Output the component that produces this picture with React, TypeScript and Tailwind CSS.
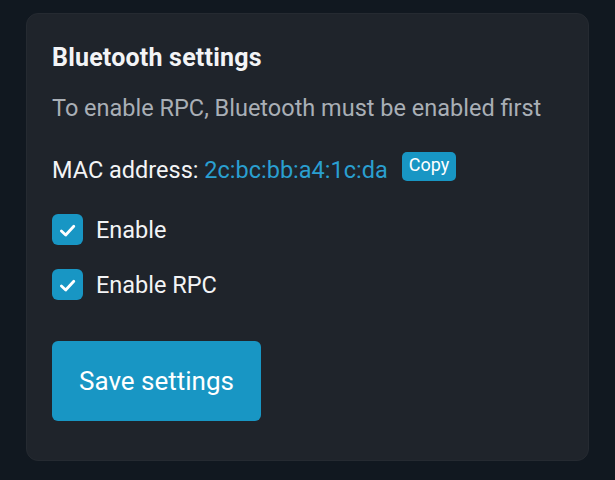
import { useState } from 'react';

// Small checkbox row used for both toggles
function CheckRow({ label, checked, onChange }: { label: string; checked: boolean; onChange: () => void }) {
    return (
        <label className="flex items-center gap-[13px] cursor-pointer select-none">
            <span
                onClick={onChange}
                className={`flex items-center justify-center w-[31px] h-[31px] rounded-[6px] ${checked ? 'bg-[#1896c4]' : 'border-2 border-[#6b7280]'}`}
            >
                {checked && (
                    <svg width="31" height="31" viewBox="0 0 31 31" fill="none">
                        <path d="M9.4 17l4.3 4L21.8 12.2" stroke="white" strokeWidth="2.8" strokeLinecap="round" strokeLinejoin="round" />
                    </svg>
                )}
            </span>
            <span className="text-[23.5px] leading-[30px] text-[#f3f4f6]">{label}</span>
        </label>
    );
}

export default function App() {
    const [enabled, setEnabled] = useState(true);
    const [rpc, setRpc] = useState(true);
    const mac = '2c:bc:bb:a4:1c:da';

    return (
        <div
            className="min-h-screen bg-[#111820] pt-[13px] pl-[26px] pr-[26px] pb-[19px]"
            style={{ fontFamily: 'Roboto, "Noto Sans", sans-serif' }}
        >
            <div className="w-[563px] h-[448px] bg-[#1f242b] rounded-[12px] border border-[#252a31] pt-[27px] px-[25px]">
                <h2 className="text-[25px] font-bold tracking-[0.2px] text-[#f3f4f6] leading-[34px]">Bluetooth settings</h2>
                <p className="mt-[18px] text-[23.5px] text-[#a9afb6] leading-[30px]">
                    To enable RPC, Bluetooth must be enabled first
                </p>

                <div className="mt-[32px] flex items-start text-[23.5px] leading-[30px]">
                    <span className="text-[#f3f4f6]">MAC address:&nbsp;</span>
                    <span className="text-[#2a9fd0]">{mac}</span>
                    <button
                        className="ml-[14px] -mt-[3px] h-[29px] bg-[#1896c4] text-white text-[18px] leading-[20px] px-[7px] pb-[4px] rounded-[5px]"
                        onClick={() => navigator.clipboard?.writeText(mac)}
                    >
                        Copy
                    </button>
                </div>

                <div className="mt-[29px] flex flex-col gap-[24px]">
                    <CheckRow label="Enable" checked={enabled} onChange={() => setEnabled(!enabled)} />
                    <CheckRow label="Enable RPC" checked={rpc} onChange={() => setRpc(!rpc)} />
                </div>

                <button className="mt-[41px] w-[209px] h-[80px] bg-[#1896c4] rounded-[6px] text-[26px] text-white">
                    Save settings
                </button>
            </div>
        </div>
    );
}
